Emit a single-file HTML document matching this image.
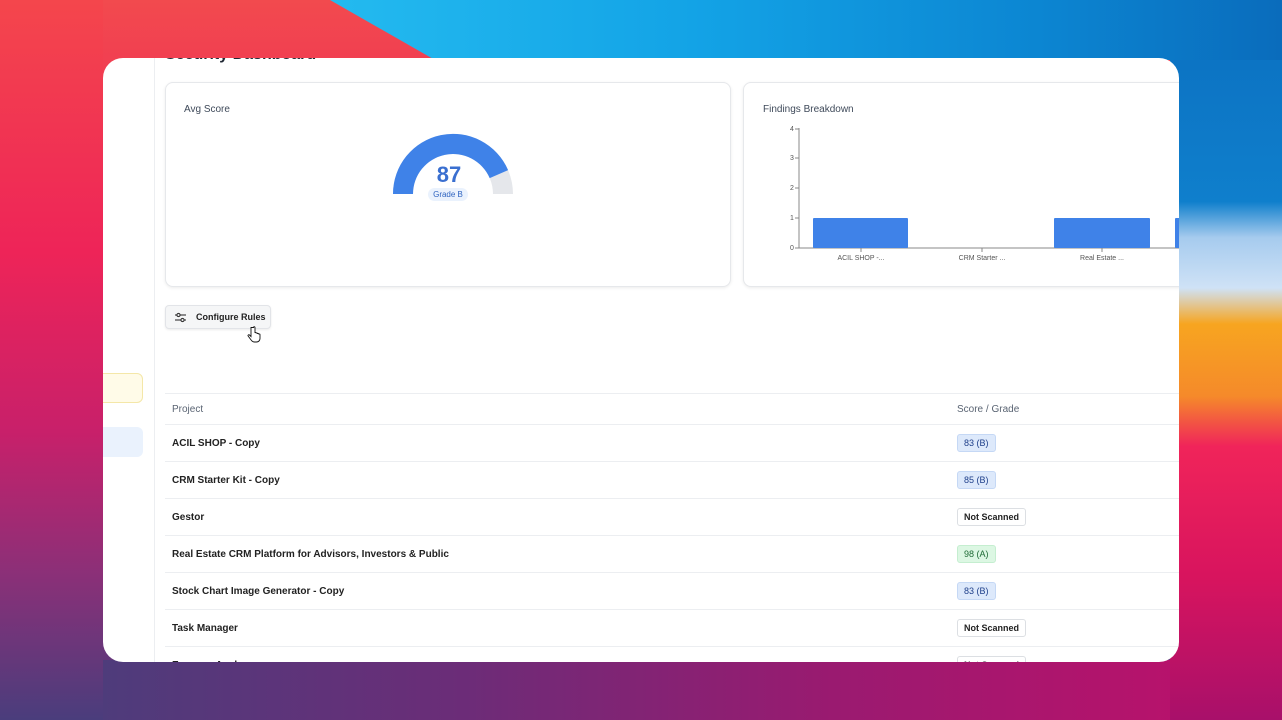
<!DOCTYPE html>
<html><head><meta charset="utf-8"><style>
*{margin:0;padding:0;box-sizing:border-box}
body{width:1282px;height:720px;overflow:hidden;position:relative;font-family:"Liberation Sans",sans-serif;
background:linear-gradient(180deg,#f24a4e 0%,#ee2459 30%,#d41d66 50%,#9a2a78 75%,#4a3c7c 100%);}
.bg{position:absolute}
.win{position:absolute;left:103px;top:58px;width:1076px;height:604px;background:#fff;border-radius:20px;overflow:hidden}
.side{position:absolute;left:0;top:0;width:52px;height:604px;border-right:1px solid #eceef1}
.card{position:absolute;background:#fff;border:1px solid #e6e8eb;border-radius:8px;box-shadow:0 1px 3px rgba(0,0,0,.08)}
.ct{position:absolute;font-size:10px;color:#3f4a5a}
.btn{position:absolute;left:62px;top:247px;width:106px;height:24px;border:1px solid #e2e4e8;border-radius:4px;background:#f5f6f7;font-size:9px;font-weight:bold;color:#222;box-shadow:0 1px 2px rgba(0,0,0,.08)}
table{position:absolute;left:62px;top:335px;width:1030px;border-collapse:collapse;font-size:10px}
td,th{height:37px;border-bottom:1px solid #eceef1;text-align:left;padding-left:7px;color:#222;font-weight:bold}
th{height:31px;color:#5a6473;font-weight:normal;font-size:10px}
.tb{border-top:1px solid #eceef1}
.b{display:inline-block;padding:3px 6px;border-radius:3px;font-size:9px;font-weight:normal;border:1px solid}
.bb{background:#dde9fb;border-color:#c5d8f5;color:#1e3f8a}
.bg2{background:#dcf7e3;border-color:#c5eed0;color:#1e6b35}
.bn{background:#fff;border-color:#dcdfe3;color:#222;font-weight:bold}
</style></head><body>
<div class="bg" style="left:0;top:660px;width:1282px;height:60px;background:linear-gradient(90deg,#46407c 0%,#6a2d78 35%,#9a1a70 65%,#c0106a 100%)"></div>
<div class="bg" style="left:0;top:0;width:103px;height:720px;background:linear-gradient(180deg,#f4464c 0%,#ee2458 35%,#c8206a 60%,#8a3078 80%,#4a3d7c 100%)"></div>
<div class="bg" style="left:1170px;top:0;width:112px;height:720px;background:linear-gradient(180deg,#0b6fc0 0%,#0f7fcc 28%,#a6cbee 33%,#cfe2f6 40%,#f7a520 45%,#f58a2a 55%,#f0245a 62%,#d8145e 80%,#a8106a 100%)"></div>
<div class="bg" style="left:300px;top:0;width:982px;height:60px;background:linear-gradient(90deg,#25bcf0,#13a3e6 40%,#0c86d2 75%,#0a6cbc);clip-path:polygon(30px 0,100% 0,100% 100%,135px 100%)"></div>
<div class="win">
<div class="side"></div>
<div style="position:absolute;left:62px;top:-12px;font-size:16px;font-weight:bold;color:#1f2733">Security Dashboard</div>
<div style="position:absolute;left:-10px;top:315px;width:50px;height:30px;background:#fffbe8;border:1px solid #f4e7a8;border-radius:6px"></div>
<div style="position:absolute;left:-10px;top:369px;width:50px;height:30px;background:#eaf2fd;border-radius:6px"></div>
<div class="card" style="left:62px;top:24px;width:566px;height:205px">
<div class="ct" style="left:18px;top:21px">Avg Score</div>
<svg style="position:absolute;left:225px;top:49px" width="124" height="70">
<path d="M2 62 A60 60 0 0 1 122 62 L102 62 A40 40 0 0 0 22 62Z" fill="#e5e7eb"/>
<path d="M2 62 A60 60 0 0 1 117.1 38.1 L98.7 46.1 A40 40 0 0 0 22 62Z" fill="#3f82e8"/>
</svg>
<div style="position:absolute;left:0;width:566px;text-align:center;top:79px;font-size:22px;font-weight:bold;color:#3a6fd0">87</div>
<div style="position:absolute;left:262px;top:105px;width:40px;height:13px;border-radius:7px;background:#eaf2fd;font-size:8px;color:#2f64c0;text-align:center;line-height:13px">Grade B</div>
</div>
<div class="card" style="left:640px;top:24px;width:460px;height:205px">
<div class="ct" style="left:19px;top:21px">Findings Breakdown</div>
<svg style="position:absolute;left:0;top:0" width="460" height="205" font-family="Liberation Sans" font-size="7" fill="#555">
<line x1="55" y1="45" x2="55" y2="165" stroke="#888"/>
<line x1="55" y1="165" x2="460" y2="165" stroke="#888"/>
<g stroke="#888"><line x1="51" y1="46" x2="55" y2="46"/><line x1="51" y1="75" x2="55" y2="75"/><line x1="51" y1="105" x2="55" y2="105"/><line x1="51" y1="135" x2="55" y2="135"/><line x1="51" y1="165" x2="55" y2="165"/>
<line x1="117" y1="165" x2="117" y2="169"/><line x1="238" y1="165" x2="238" y2="169"/><line x1="358" y1="165" x2="358" y2="169"/></g>
<text x="46" y="48">4</text><text x="46" y="77">3</text><text x="46" y="107">2</text><text x="46" y="137">1</text><text x="46" y="167">0</text>
<rect x="69" y="135" width="95" height="30" rx="1" fill="#3f82e8"/>
<rect x="310" y="135" width="96" height="30" rx="1" fill="#3f82e8"/>
<rect x="431" y="135" width="40" height="30" rx="1" fill="#3f82e8"/>
<text x="117" y="177" text-anchor="middle">ACIL SHOP -...</text>
<text x="238" y="177" text-anchor="middle">CRM Starter ...</text>
<text x="358" y="177" text-anchor="middle">Real Estate ...</text>
</svg>
</div>
<div class="btn">
<svg style="position:absolute;left:9px;top:6px" width="11" height="11" fill="none" stroke="#333" stroke-width="1.1"><line x1="0" y1="3" x2="11" y2="3"/><line x1="0" y1="8" x2="11" y2="8"/><circle cx="3.5" cy="3" r="1.6" fill="#f5f6f7"/><circle cx="7.5" cy="8" r="1.6" fill="#f5f6f7"/></svg>
<span style="position:absolute;left:30px;top:6px">Configure Rules</span></div>
<table>
<tr><th class="tb" style="width:785px">Project</th><th class="tb">Score / Grade</th></tr>
<tr><td>ACIL SHOP - Copy</td><td><span class="b bb">83 (B)</span></td></tr>
<tr><td>CRM Starter Kit - Copy</td><td><span class="b bb">85 (B)</span></td></tr>
<tr><td>Gestor</td><td><span class="b bn">Not Scanned</span></td></tr>
<tr><td>Real Estate CRM Platform for Advisors, Investors &amp; Public</td><td><span class="b bg2">98 (A)</span></td></tr>
<tr><td>Stock Chart Image Generator - Copy</td><td><span class="b bb">83 (B)</span></td></tr>
<tr><td>Task Manager</td><td><span class="b bn">Not Scanned</span></td></tr>
<tr><td>Expense Analyzer</td><td><span class="b bn">Not Scanned</span></td></tr>
</table>
<svg style="position:absolute;left:144px;top:268px" width="14" height="18" viewBox="0 0 14 18"><path d="M4 1.5v9l-1.5-1.5c-.8-.8-2 .2-1.3 1.1l3.3 4.4c.8 1 1.8 1.5 3 1.5h2c2 0 3.5-1.5 3.5-3.5V8.5c0-.8-1.2-.8-1.2 0V8c0-.8-1.3-.8-1.3 0V7.5c0-.8-1.3-.8-1.3 0V7c0-.8-1.2-.8-1.2 0V1.5c0-1-1.5-1-1.5 0z" fill="#fff" stroke="#111" stroke-width=".9"/></svg>
</div>
</body></html>
